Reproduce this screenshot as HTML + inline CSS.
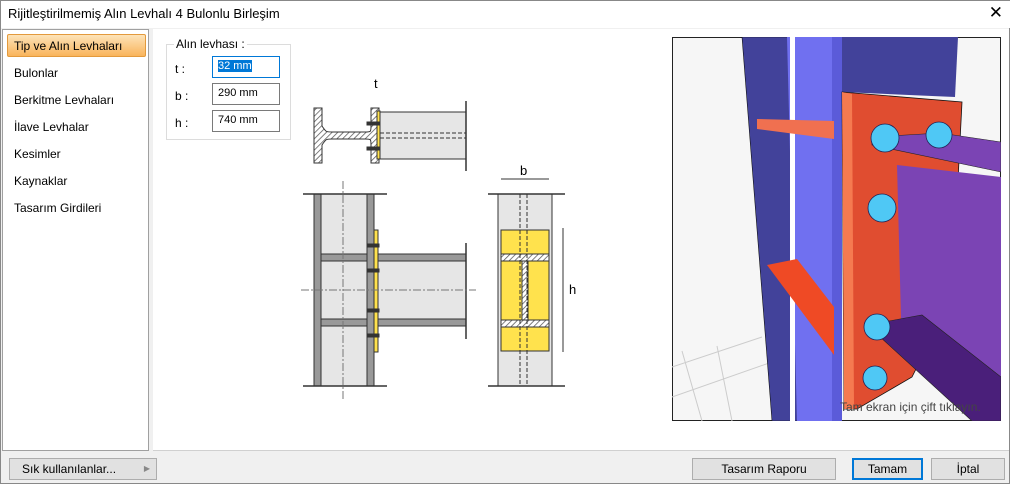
<!DOCTYPE html>
<html><head><meta charset="utf-8"><style>
*{margin:0;padding:0;box-sizing:border-box}
body{width:1010px;height:484px;background:#f0f0f0;font-family:"Liberation Sans",sans-serif;font-size:12px;color:#000;position:relative;overflow:hidden;border:1px solid #888}
.title{position:absolute;left:0;top:0;width:1010px;height:27px;background:#fff}
.title span{position:absolute;left:7px;top:5px;font-size:13px}
.close{position:absolute;right:8px;top:2px;font-size:17px}
.left{position:absolute;left:1px;top:28px;width:147px;height:422px;background:#fff;border:1px solid #a0a0a0}
.main{position:absolute;left:152px;top:28px;width:856px;height:422px;background:#fff;border-bottom:1px solid #d0d0d0}
.item{position:absolute;left:11px;font-size:12px}
.sel{position:absolute;left:4px;top:4px;width:139px;height:23px;background:linear-gradient(#fde3b8,#f9b45c);border:1px solid #e39a3c;border-radius:2px}
.grp{position:absolute;left:165px;top:43px;width:125px;height:96px;border:1px solid #dcdcdc}
.grp .lg{position:absolute;left:7px;top:-8px;background:#fff;padding:0 2px}
.lbl{position:absolute;left:8px}
.inp{position:absolute;left:45px;width:68px;height:22px;border:1px solid #7a7a7a;padding:3px 5px;font-size:11px}
.btn{position:absolute;top:457px;height:22px;background:#e1e1e1;border:1px solid #adadad;text-align:center;font-size:12px;line-height:20px}
</style></head><body>
<div class="title"><span>Rijitleştirilmemiş Alın Levhalı 4 Bulonlu Birleşim</span><div class="close">✕</div></div>
<div class="left">
<div class="sel"></div>
<div class="item" style="top:9px">Tip ve Alın Levhaları</div>
<div class="item" style="top:36px">Bulonlar</div>
<div class="item" style="top:63px">Berkitme Levhaları</div>
<div class="item" style="top:90px">İlave Levhalar</div>
<div class="item" style="top:117px">Kesimler</div>
<div class="item" style="top:144px">Kaynaklar</div>
<div class="item" style="top:171px">Tasarım Girdileri</div>
</div>
<div class="main"></div>
<div class="grp"><div class="lg">Alın levhası :</div>
<div class="lbl" style="top:17px">t :</div><div class="inp" style="top:11px;border-color:#0078d7"><span style="background:#0078d7;color:#fff">32 mm</span></div>
<div class="lbl" style="top:44px">b :</div><div class="inp" style="top:38px">290 mm</div>
<div class="lbl" style="top:71px">h :</div><div class="inp" style="top:65px">740 mm</div>
</div>
<svg style="position:absolute;left:290px;top:70px" width="300" height="330" viewBox="0 0 300 330">
<defs><pattern id="h" width="4" height="4" patternUnits="userSpaceOnUse" patternTransform="rotate(45)"><rect width="4" height="4" fill="#fff"/><line x1="0" y1="0" x2="0" y2="4" stroke="#555" stroke-width="1.5"/></pattern></defs>
<g stroke="#333" stroke-width="1">
<text x="83" y="17" font-size="13" stroke="none">t</text>
<path d="M23 37h8v18c4 6 4 6 10 6h33c6 0 6 0 6-6v-18h8v55h-8v-18c0-6 0-6-6-6h-33c-6 0-6 0-10 6v18h-8z" fill="url(#h)"/>
<rect x="86" y="40" width="3" height="48" fill="#ffe24d"/>
<rect x="89" y="41" width="86" height="47" fill="#e6e6e6"/>
<path d="M89 62h86M89 67h86" stroke-dasharray="4 2"/>
<path d="M175 30v70" stroke-width="1.5"/>
<rect x="76" y="51" width="13" height="3" fill="#333"/><rect x="76" y="76" width="13" height="3" fill="#333"/>
<rect x="23" y="123" width="60" height="192" fill="#e6e6e6" stroke="none"/>
<rect x="87" y="183" width="88" height="72" fill="#e6e6e6" stroke="none"/>
<rect x="23" y="123" width="7" height="192" fill="#999"/>
<rect x="76" y="123" width="7" height="192" fill="#999"/>
<rect x="83" y="159" width="4" height="122" fill="#ffe24d"/>
<rect x="30" y="183" width="46" height="7" fill="#999"/><rect x="87" y="183" width="88" height="7" fill="#999"/>
<rect x="30" y="248" width="46" height="7" fill="#999"/><rect x="87" y="248" width="88" height="7" fill="#999"/>
<rect x="76" y="173" width="12" height="3" fill="#333"/><rect x="76" y="198" width="12" height="3" fill="#333"/><rect x="76" y="238" width="12" height="3" fill="#333"/><rect x="76" y="263" width="12" height="3" fill="#333"/>
<path d="M12 123h84M12 315h84M175 172v96" stroke-width="1.5"/>
<path d="M10 219h175M52 110v220" stroke-dasharray="8 2 2 2" stroke="#777"/>
<rect x="207" y="123" width="54" height="192" fill="#e6e6e6"/>
<path d="M197 123h77M197 315h77" stroke-width="1.5"/>
<rect x="210" y="159" width="48" height="121" fill="#ffe24d"/>
<rect x="210" y="183" width="48" height="7" fill="url(#h)"/><rect x="210" y="249" width="48" height="7" fill="url(#h)"/>
<rect x="231" y="190" width="6" height="59" fill="url(#h)"/>
<path d="M229 123v192M236 123v192" stroke-dasharray="4 2"/>
<path d="M210 108h48M272 157v124"/>
<text x="229" y="104" font-size="13" stroke="none">b</text>
<text x="278" y="223" font-size="13" stroke="none">h</text>
</g></svg>
<svg style="position:absolute;left:671px;top:36px" width="329" height="384" viewBox="0 0 329 384">
<rect x="0" y="0" width="329" height="384" fill="#f6f6f6" stroke="#222" stroke-width="2"/>
<g stroke="#ccc" fill="none"><path d="M0 330l90-30M0 360l100-35M30 384l-20-70M60 384l-15-75"/></g>
<polygon points="70,0 166,0 166,384 100,384" fill="#42429a" stroke="#111" stroke-width=".6"/>
<polygon points="115,0 160,0 160,384 125,384" fill="#7070f0"/>
<rect x="118" y="0" width="5" height="384" fill="#fff"/>
<rect x="160" y="0" width="10" height="384" fill="#5b5bd9"/>
<polygon points="170,0 286,0 283,60 170,55" fill="#42429a"/>
<polygon points="85,82 162,84 162,102 85,92" fill="#f07050"/>
<polygon points="95,228 125,222 162,270 162,318" fill="#ef4a25"/>
<polygon points="170,55 290,65 280,260 240,340 185,372 172,372" fill="#e04d30" stroke="#111" stroke-width=".8"/>
<polygon points="170,55 180,57 182,372 172,372" fill="#f57a50"/>
<polygon points="225,128 329,140 329,384 305,384 230,320" fill="#7b44b4"/>
<polygon points="200,100 268,96 329,105 329,135 200,108" fill="#7b44b4" stroke="#222" stroke-width=".6"/>
<polygon points="195,288 250,278 329,340 329,384 300,384" fill="#4a1f7a" stroke="#222" stroke-width=".6"/>
<g fill="#4fc8f5" stroke="#225" stroke-width=".8">
<circle cx="213" cy="101" r="14"/><circle cx="267" cy="98" r="13"/><circle cx="210" cy="171" r="14"/><circle cx="205" cy="290" r="13"/><circle cx="203" cy="341" r="12"/></g>
<text x="168" y="374" font-size="12" fill="#444" font-family="Liberation Sans">Tam ekran için çift tıklayın.</text>
</svg>
<div class="btn" style="left:8px;width:148px;text-align:left;padding-left:12px">Sık kullanılanlar...<span style="position:absolute;right:6px;color:#888;font-size:8px">▶</span></div>
<div class="btn" style="left:691px;width:144px">Tasarım Raporu</div>
<div class="btn" style="left:851px;width:71px;border:2px solid #0078d7;line-height:18px">Tamam</div>
<div class="btn" style="left:930px;width:74px">İptal</div>
</body></html>
